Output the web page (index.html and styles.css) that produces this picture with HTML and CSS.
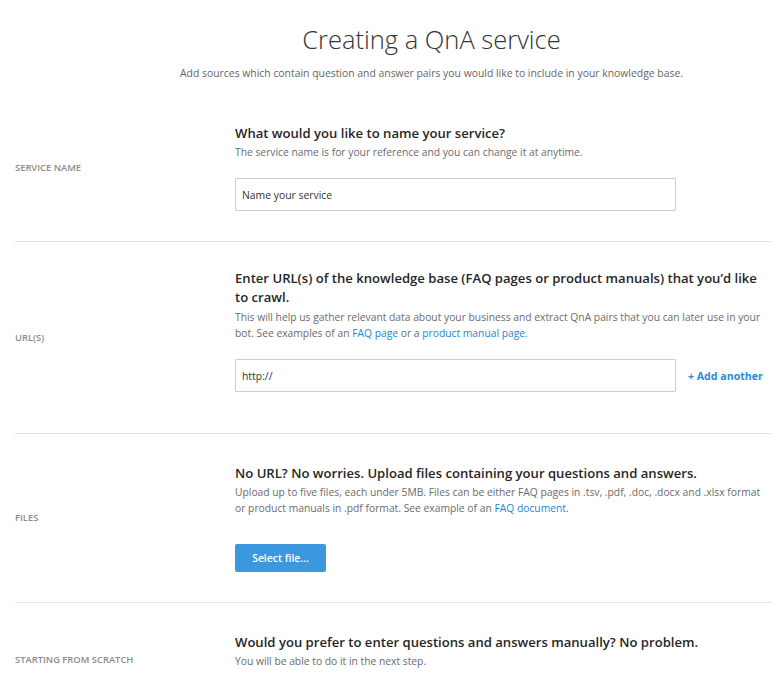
FILE: index.html
```html
<!DOCTYPE html>
<html lang="en">
<head>
<meta charset="utf-8">
<title>Creating a QnA service</title>
<link rel="stylesheet" href="styles.css">
</head>
<body>
<main class="page">
  <header class="intro">
    <h1 class="intro-title">Creating a QnA service</h1>
    <p class="intro-sub">Add sources which contain question and answer pairs you would like to include in your knowledge base.</p>
  </header>

  <section class="row row--name">
    <div class="row-label">Service name</div>
    <div class="row-body">
      <h2 class="row-heading">What would you like to name your service?</h2>
      <p class="row-desc">The service name is for your reference and you can change it at anytime.</p>
      <div class="field-line">
        <input class="field" type="text" value="Name your service">
      </div>
    </div>
  </section>

  <section class="row row--url">
    <div class="row-label">URL(s)</div>
    <div class="row-body">
      <h2 class="row-heading">Enter URL(s) of the knowledge base (FAQ pages or product manuals) that you’d like<br>to crawl.</h2>
      <p class="row-desc">This will help us gather relevant data about your business and extract QnA pairs that you can later use in your<br>bot. See examples of an <a href="#" class="link">FAQ page</a> or a <a href="#" class="link">product manual page</a>.</p>
      <div class="field-line">
        <input class="field" type="text" value="http://">
        <a href="#" class="add-link">+ Add another</a>
      </div>
    </div>
  </section>

  <section class="row">
    <div class="row-label">Files</div>
    <div class="row-body">
      <h2 class="row-heading">No URL? No worries. Upload files containing your questions and answers.</h2>
      <p class="row-desc">Upload up to five files, each under 5MB. Files can be either FAQ pages in .tsv, .pdf, .doc, .docx and .xlsx format<br>or product manuals in .pdf format. See example of an <a href="#" class="link">FAQ document</a>.</p>
      <button class="btn" type="button">Select file...</button>
    </div>
  </section>

  <section class="row row--last">
    <div class="row-label">Starting from scratch</div>
    <div class="row-body">
      <h2 class="row-heading">Would you prefer to enter questions and answers manually? No problem.</h2>
      <p class="row-desc">You will be able to do it in the next step.</p>
    </div>
  </section>
</main>
</body>
</html>
```

FILE: styles.css
```css
* { box-sizing: border-box; }

html, body {
  margin: 0;
  padding: 0;
  background: #ffffff;
}

body {
  font-family: "Open Sans", "Noto Sans", "Liberation Sans", sans-serif;
  color: #333333;
}

.page {
  padding: 0 1px 0 15px;
}

.intro {
  padding-left: 76px;
  text-align: center;
  height: 95px;
  padding-top: 23px;
}

.intro-title {
  margin: 0;
  font-size: 25.5px;
  font-weight: 300;
  line-height: 32px;
  color: #333333;
}

.intro-sub {
  margin: 10px 0 0;
  font-size: 10.4px;
  line-height: 16px;
  color: #666666;
}

.row {
  display: grid;
  grid-template-columns: 220px 1fr;
  align-items: center;
  border-bottom: 1px solid #e3e3e3;
}

.row--last {
  border-bottom: none;
}

.row-label {
  font-size: 9.4px;
  font-weight: 600;
  text-transform: uppercase;
  color: #8c8c8c;
  line-height: 12px;
}

.row-body {
  padding: 30px 0 30px;
}

.row--name .row-body {
  padding-top: 29px;
}

.row--url .row-body {
  padding: 27px 0 41px;
}

.row--last .row-body {
  padding-bottom: 47px;
}

.row-heading {
  margin: 0;
  font-size: 13.1px;
  font-weight: 600;
  line-height: 19px;
  color: #262626;
}

.row-desc {
  margin: 1px 0 0;
  font-size: 10.3px;
  line-height: 16px;
  color: #6b6b6b;
}

.row--url .row-desc {
  margin-top: 2px;
}

.link {
  color: #1b86d6;
  text-decoration: none;
}

.field-line {
  display: flex;
  align-items: center;
  gap: 12px;
  margin-top: 18px;
}

.field {
  width: 441px;
  height: 33px;
  border: 1px solid #cccccc;
  border-radius: 1px;
  padding: 0 6px;
  font-family: inherit;
  font-size: 10.4px;
  color: #333333;
  background: #ffffff;
}

.add-link {
  font-size: 10.6px;
  font-weight: 700;
  color: #2b8ad8;
  text-decoration: none;
}

.btn {
  display: block;
  margin-top: 28px;
  width: 91px;
  height: 28px;
  border: none;
  border-radius: 2px;
  background: #3c98de;
  color: #ffffff;
  font-family: inherit;
  font-size: 10.4px;
  font-weight: 600;
  cursor: pointer;
}
```
